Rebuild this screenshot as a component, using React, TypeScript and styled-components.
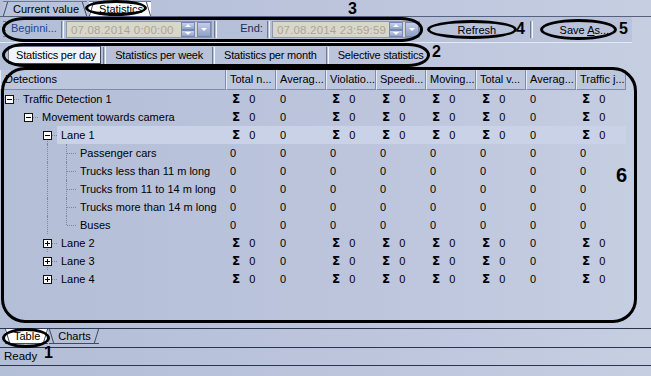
import styled, { createGlobalStyle, css } from 'styled-components'

// Окно статистики детектора трафика (скриншот из документации, с пометками 1–6).

const GlobalStyle = createGlobalStyle`
  html, body {
    margin: 0;
    padding: 0;
  }
  body {
    font-family: "Liberation Sans", Arial, sans-serif;
    font-size: 11px;
    color: #000;
  }
`

type Value = 'sum' | 'zero' | 'none'

const SUM_ROW: Value[] = ['sum', 'zero', 'sum', 'sum', 'sum', 'sum', 'zero', 'sum']
const LEAF_ROW: Value[] = ['zero', 'zero', 'zero', 'zero', 'zero', 'zero', 'zero', 'zero']

const columns = [
  'Total n...',
  'Averag...',
  'Violatio...',
  'Speedi...',
  'Moving...',
  'Total v...',
  'Averag...',
  'Traffic j...',
]

type TreeRow = {
  label: string
  expander?: 'minus' | 'plus'
  guides: boolean[]
  tail?: 'full' | 'top'
  selected?: boolean
  values: Value[]
}

const rows: TreeRow[] = [
  { label: 'Traffic Detection 1', expander: 'minus', guides: [], values: SUM_ROW },
  { label: 'Movement towards camera', expander: 'minus', guides: [false], values: SUM_ROW },
  { label: 'Lane 1', expander: 'minus', guides: [false, false], tail: 'full', selected: true, values: SUM_ROW },
  { label: 'Passenger cars', guides: [false, false, true], tail: 'full', values: LEAF_ROW },
  { label: 'Trucks less than 11 m long', guides: [false, false, true], tail: 'full', values: LEAF_ROW },
  { label: 'Trucks from 11 to 14 m long', guides: [false, false, true], tail: 'full', values: LEAF_ROW },
  { label: 'Trucks more than 14 m long', guides: [false, false, true], tail: 'full', values: LEAF_ROW },
  { label: 'Buses', guides: [false, false, true], tail: 'top', values: LEAF_ROW },
  { label: 'Lane 2', expander: 'plus', guides: [false, false], tail: 'full', values: SUM_ROW },
  { label: 'Lane 3', expander: 'plus', guides: [false, false], tail: 'full', values: SUM_ROW },
  { label: 'Lane 4', expander: 'plus', guides: [false, false], tail: 'top', values: SUM_ROW },
]

function DateBox({ value, width }: { value: string; width: number }) {
  return (
    <Field style={{ width }}>
      <FieldText>{value}</FieldText>
      <Spin>
        <SpinHalf>
          <Arrow $up />
        </SpinHalf>
        <SpinHalf>
          <Arrow />
        </SpinHalf>
      </Spin>
      <DropBtn>
        <Arrow />
      </DropBtn>
    </Field>
  )
}

export default function App() {
  return (
    <>
      <GlobalStyle />
      <Window>
        <TopTabs>
          <TopTab>Current value</TopTab>
          <TopTab $active>Statistics</TopTab>
        </TopTabs>

        <Toolbar>
          <Grip />
          <BlueLabel>Beginni...</BlueLabel>
          <Sep />
          <DateBox value="07.08.2014 0:00:00" width={146} />
          <Sep />
          <EndLabel>End:</EndLabel>
          <Sep />
          <DateBox value="07.08.2014 23:59:59" width={148} />
          <ToolButton style={{ width: 86, marginLeft: 14 }}>Refresh</ToolButton>
          <Sep style={{ marginLeft: 10 }} />
          <ToolButton style={{ width: 67, marginLeft: 16 }}>
            Save <u>A</u>s...
          </ToolButton>
        </Toolbar>

        <PeriodTabs>
          <PeriodTab $active>Statistics per day</PeriodTab>
          <Sep />
          <PeriodTab>Statistics per week</PeriodTab>
          <Sep />
          <PeriodTab>Statistics per month</PeriodTab>
          <Sep />
          <PeriodTab>Selective statistics</PeriodTab>
        </PeriodTabs>

        <Table>
          <HeaderRow>
            <HeadCell $first>Detections</HeadCell>
            {columns.map((c, i) => (
              <HeadCell key={i}>{c}</HeadCell>
            ))}
          </HeaderRow>
          {rows.map((r, i) => (
            <Row key={i}>
              <TreeCell>
                {r.guides.map((g, j) => (
                  <Guide key={j} $line={g} />
                ))}
                <Branch $tail={r.tail} $leaf={!r.expander}>
                  {r.expander && <Expander $plus={r.expander === 'plus'} />}
                </Branch>
                <Label $selected={r.selected}>{r.label}</Label>
              </TreeCell>
              {r.values.map((v, j) => (
                <ValueCell key={j} $selected={r.selected}>
                  {v === 'sum' && (
                    <>
                      <Sigma>Σ</Sigma>
                      <Num>0</Num>
                    </>
                  )}
                  {v === 'zero' && <Num>0</Num>}
                </ValueCell>
              ))}
            </Row>
          ))}
        </Table>

        <BottomTabs>
          <BottomTab $active>Table</BottomTab>
          <BottomTab>Charts</BottomTab>
        </BottomTabs>
        <StatusBar>Ready</StatusBar>
        <BottomStrip />

        {/* пометки поверх скриншота */}
        <Mark style={{ left: 85, top: 0, width: 62, height: 16 }} />
        <Mark $pill style={{ left: 2, top: 17, width: 421, height: 25 }} />
        <Mark style={{ left: 427, top: 20, width: 90, height: 19 }} />
        <Mark style={{ left: 540, top: 19, width: 77, height: 21 }} />
        <Mark $pill style={{ left: 2, top: 43, width: 428, height: 24 }} />
        <Mark $box style={{ left: 1, top: 67, width: 636, height: 256 }} />
        <Mark style={{ left: 2, top: 328, width: 48, height: 20 }} />

        <Callout style={{ left: 348, top: 1 }}>3</Callout>
        <Callout style={{ left: 516, top: 21 }}>4</Callout>
        <Callout style={{ left: 619, top: 21 }}>5</Callout>
        <Callout style={{ left: 432, top: 44 }}>2</Callout>
        <Callout $big style={{ left: 616, top: 165 }}>6</Callout>
        <Callout style={{ left: 44, top: 345 }}>1</Callout>
      </Window>
    </>
  )
}

const lineColor = '#2b3552'
const dotColor = '#7a86a3'

const Window = styled.div`
  position: relative;
  width: 651px;
  height: 376px;
  overflow: hidden;
  display: flex;
  flex-direction: column;
  background: linear-gradient(90deg, #b3bed7 0%, #bcc5dc 55%, #c6cee2 100%);
`

const TopTabs = styled.div`
  height: 16px;
  display: flex;
  align-items: flex-end;
  padding-left: 3px;
  border-bottom: 1px solid #55617e;
`

const TopTab = styled.div<{ $active?: boolean }>`
  position: relative;
  height: 14px;
  line-height: 14px;
  padding: 0 8px 0 10px;
  margin-right: 2px;
  border-top: 1px solid #6b7794;
  background: ${({ $active }) => ($active ? '#fff' : '#b9c3da')};

  &::before,
  &::after {
    content: '';
    position: absolute;
    top: 0;
    bottom: 0;
    width: 1px;
    background: #3f4a66;
  }
  &::before {
    left: 2px;
    transform: skewX(-17deg);
  }
  &::after {
    right: 2px;
    transform: skewX(17deg);
  }
`

const Toolbar = styled.div`
  width: 632px;
  height: 25px;
  display: flex;
  align-items: center;
  border-bottom: 1px solid #e4e9f3;
  background: linear-gradient(90deg, #b3bed7 0%, #bac3da 100%);
`

const Grip = styled.div`
  width: 3px;
  height: 18px;
  margin: 0 2px 0 3px;
  background: repeating-linear-gradient(180deg, #6b7795 0 1px, transparent 1px 3px);
`

const BlueLabel = styled.span`
  color: #24439a;
  padding: 0 2px 0 3px;
  margin-bottom: 4px;
`

const EndLabel = styled.span`
  width: 44px;
  text-align: right;
  color: #1c2a55;
  padding-right: 2px;
  margin-bottom: 4px;
`

const Sep = styled.div`
  width: 1px;
  height: 17px;
  margin: 0 2px;
  border-left: 1px solid #6f7a96;
  border-right: 1px solid #f2f5fa;
  flex-shrink: 0;
`

const Field = styled.div`
  height: 17px;
  display: flex;
  align-items: center;
  border: 1px solid #8e98b0;
  background: #d9d6ca;
  box-sizing: border-box;
`

const FieldText = styled.span`
  flex: 1;
  padding-left: 4px;
  color: #aaa697;
  font-size: 11.5px;
  letter-spacing: 0.2px;
`

const Spin = styled.div`
  width: 14px;
  height: 15px;
  display: flex;
  flex-direction: column;
  margin-right: 2px;
`

const SpinHalf = styled.div`
  flex: 1;
  display: flex;
  align-items: center;
  justify-content: center;
  background: linear-gradient(180deg, #c9d3ea, #8fa3cb);
  border: 1px solid #7587b2;
  box-sizing: border-box;
`

const DropBtn = styled.div`
  width: 14px;
  height: 15px;
  display: flex;
  align-items: center;
  justify-content: center;
  background: linear-gradient(180deg, #c3cde6, #8ea1c9);
  border: 1px solid #7587b2;
  box-sizing: border-box;
`

const Arrow = styled.span<{ $up?: boolean }>`
  width: 0;
  height: 0;
  border-left: 3px solid transparent;
  border-right: 3px solid transparent;
  ${({ $up }) =>
    $up
      ? css`border-bottom: 3px solid #fff;`
      : css`border-top: 3px solid #fff;`}
`

const ToolButton = styled.div`
  height: 18px;
  line-height: 18px;
  text-align: center;
  color: #000;
`

const PeriodTabs = styled.div`
  height: 24px;
  display: flex;
  align-items: center;
  padding-left: 8px;

  ${Sep} {
    margin: 0 1px;
  }
`

const PeriodTab = styled.div<{ $active?: boolean }>`
  height: 16px;
  line-height: 16px;
  padding: 0 8px;
  letter-spacing: -0.2px;
  white-space: nowrap;
  ${({ $active }) =>
    $active &&
    css`
      padding: 0 4px 0 7px;
      margin-right: 1px;
      background: #f1f3f8;
      border: 1px solid #6c7793;
      border-right-color: #42495c;
      border-bottom-color: #42495c;
    `}
`

const Table = styled.div`
  flex: 1;
  padding-top: 3px;
`

const HeaderRow = styled.div`
  display: flex;
  height: 20px;
`

const HeadCell = styled.div<{ $first?: boolean }>`
  width: ${({ $first }) => ($first ? 226 : 50)}px;
  box-sizing: border-box;
  padding-left: ${({ $first }) => ($first ? 4 : 3)}px;
  line-height: 19px;
  white-space: nowrap;
  overflow: hidden;
  border-left: 1px solid #e6ebf5;
  border-right: 1px solid #7f8ba8;
  border-bottom: 1px solid #7f8ba8;
  background: #bcc6dd;
`

const Row = styled.div`
  display: flex;
  height: 18px;
`

const TreeCell = styled.div`
  width: 226px;
  display: flex;
  align-items: stretch;
`

const Guide = styled.span<{ $line?: boolean }>`
  width: 19px;
  flex-shrink: 0;
  position: relative;
  ${({ $line }) =>
    $line &&
    css`
      &::before {
        content: '';
        position: absolute;
        left: 9px;
        top: 0;
        bottom: 0;
        border-left: 1px dotted ${dotColor};
      }
    `}
`

const Branch = styled.span<{ $tail?: 'full' | 'top'; $leaf?: boolean }>`
  width: 19px;
  flex-shrink: 0;
  position: relative;
  display: flex;
  align-items: center;
  justify-content: center;

  &::before {
    content: '';
    position: absolute;
    left: 9px;
    top: ${({ $leaf }) => ($leaf ? 0 : 13)}px;
    bottom: ${({ $tail }) => ($tail === 'top' ? 9 : 0)}px;
    border-left: 1px dotted ${dotColor};
    display: ${({ $tail }) => ($tail ? 'block' : 'none')};
  }
  &::after {
    content: '';
    position: absolute;
    left: ${({ $leaf }) => ($leaf ? 10 : 14)}px;
    right: 0;
    top: 9px;
    border-top: 1px dotted ${dotColor};
  }
`

// квадратик [−] / [+] рисуется линиями, без текста
const Expander = styled.span<{ $plus?: boolean }>`
  position: relative;
  z-index: 1;
  width: 9px;
  height: 9px;
  box-sizing: border-box;
  border: 1px solid #111;
  background: #fff;

  &::before {
    content: '';
    position: absolute;
    left: 1px;
    right: 1px;
    top: 3px;
    height: 1px;
    background: #000;
  }
  ${({ $plus }) =>
    $plus &&
    css`
      &::after {
        content: '';
        position: absolute;
        top: 1px;
        bottom: 1px;
        left: 3px;
        width: 1px;
        background: #000;
      }
    `}
`

const Label = styled.span<{ $selected?: boolean }>`
  flex: 1;
  padding-left: 4px;
  line-height: 18px;
  white-space: nowrap;
  background: ${({ $selected }) => ($selected ? '#c9d2e6' : 'transparent')};
`

const ValueCell = styled.div<{ $selected?: boolean }>`
  width: 50px;
  display: flex;
  align-items: center;
  padding-left: 4px;
  box-sizing: border-box;
  background: ${({ $selected }) => ($selected ? '#c9d2e6' : 'transparent')};
`

const Sigma = styled.span`
  font-family: "DejaVu Sans", sans-serif;
  font-weight: bold;
  font-size: 12px;
  margin: 0 9px 0 2px;
`

const Num = styled.span`
  font-size: 11px;
`

const BottomTabs = styled.div`
  height: 18px;
  display: flex;
  align-items: flex-start;
  padding-left: 5px;
  border-top: 1px solid ${lineColor};
`

const BottomTab = styled.div<{ $active?: boolean }>`
  position: relative;
  height: 14px;
  line-height: 14px;
  padding: 0 8px 0 9px;
  margin-right: 1px;
  border-bottom: 1px solid #3f4a66;
  background: ${({ $active }) => ($active ? '#fff' : 'transparent')};

  &::before,
  &::after {
    content: '';
    position: absolute;
    top: 0;
    bottom: 0;
    width: 1px;
    background: #3f4a66;
  }
  &::before {
    left: 2px;
    transform: skewX(17deg);
  }
  &::after {
    right: 2px;
    transform: skewX(-17deg);
  }
`

const StatusBar = styled.div`
  height: 17px;
  line-height: 17px;
  padding-left: 4px;
  font-size: 11.5px;
  border-top: 1px solid ${lineColor};
  border-bottom: 1px solid ${lineColor};
`

const BottomStrip = styled.div`
  height: 10px;
`

const Mark = styled.div<{ $pill?: boolean; $box?: boolean }>`
  position: absolute;
  box-sizing: border-box;
  border: 3px solid #000;
  border-radius: ${({ $pill, $box }) => ($box ? '24px' : $pill ? '22px / 12px' : '50%')};
  pointer-events: none;
`

const Callout = styled.div<{ $big?: boolean }>`
  position: absolute;
  font-family: "Liberation Sans", Arial, sans-serif;
  font-weight: bold;
  font-size: ${({ $big }) => ($big ? 20 : 16)}px;
  line-height: 1;
`
